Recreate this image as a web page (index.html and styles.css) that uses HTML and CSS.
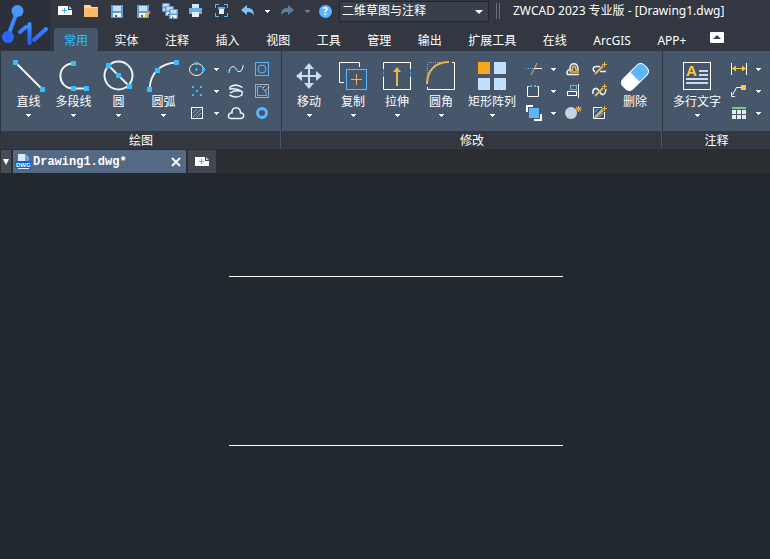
FILE: index.html
```html
<!DOCTYPE html>
<html lang="zh-CN">
<head>
<meta charset="utf-8">
<title>ZWCAD 2023 专业版 - [Drawing1.dwg]</title>
<link rel="stylesheet" href="styles.css">
</head>
<body>
<svg class="defs" width="0" height="0">
  <defs>
    <linearGradient id="brand" x1="0" y1="0" x2="0" y2="1"><stop offset="0" stop-color="#3f93ff"/><stop offset="1" stop-color="#2a5cff"/></linearGradient>
    <symbol id="caret" viewBox="0 0 5 3"><path d="M0 0h5v1H4v1H3v1H2V2H1V1H0z" fill="currentColor"/></symbol>
    <symbol id="newdoc" viewBox="0 0 22 22"><path d="M4 6h10v4h4v5H4z" fill="#fff"/><path d="M15 6l3 3h-3z" fill="#a8d4fb"/><path d="M10.500 8v5M8 10.500h5" stroke="#3fa9f5" fill="none"/></symbol>
    <symbol id="disk" viewBox="0 0 12 13"><path d="M0 0h12v13H0z" fill="#5b9bd8"/><path d="M2 1h8v5H2z" fill="#c3e0fb"/><path d="M2 8h8v4H2z" fill="#fff"/><path d="M4 10h2v2H4z" fill="#3c5878"/></symbol>
    <symbol id="wand" viewBox="0 0 22 22"><path d="M7 16l8-8" stroke="#ecb74f" stroke-width="2"/><path d="M16.500 4v5M14 6.500h5" stroke="#ecb74f"/></symbol>
  </defs>
</svg>

<header class="top">
  <svg class="logo" viewBox="0 0 50 50">
    <path d="M17 12L8 36" stroke="#3987ff" stroke-width="4"/>
    <circle cx="17.500" cy="11" r="6" fill="#4797ff"/><circle cx="8" cy="37" r="6" fill="#2d65ff"/>
    <path d="M20 32l6-5M29.500 24v19M34 40l12-11" stroke="url(#brand)" stroke-width="4" stroke-linecap="round" fill="none"/>
  </svg>
  <div class="bars">
    <div class="quick">
      <button class="q" aria-label="新建"><svg viewBox="0 0 22 22"><use href="#newdoc"/></svg></button>
      <button class="q" aria-label="打开"><svg viewBox="0 0 22 22"><path d="M4 5h6l2 2h6v10H4z" fill="#ffd79e"/><path d="M4 8h14v9H4z" fill="#ffb76c"/></svg></button>
      <button class="q" aria-label="保存"><svg viewBox="0 0 22 22"><use href="#disk" x="5" y="5" width="12" height="13"/></svg></button>
      <button class="q" aria-label="另存为"><svg viewBox="0 0 22 22"><use href="#disk" x="5" y="5" width="12" height="13"/><path d="M12 18l1-4 4-3 1 2-4 4z" fill="#ffb52c"/><path d="M16 12l1-1 2 1-1 2z" fill="#e5543b"/></svg></button>
      <button class="q" aria-label="全部保存"><svg viewBox="0 0 22 22"><use href="#disk" x="4" y="3" width="8" height="9"/><use href="#disk" x="7" y="6" width="9" height="10"/><use href="#disk" x="11" y="9" width="9" height="10"/></svg></button>
      <button class="q" aria-label="打印"><svg viewBox="0 0 22 22"><path d="M8 4h7v4H8z" fill="#d5e9fb"/><path d="M5 8h13v6H5z" fill="#69ade8"/><path d="M8 12h7v5H8z" fill="#e6edf8"/></svg></button>
      <button class="q" aria-label="预览"><svg viewBox="0 0 22 22"><path d="M5.500 8V4.500H9M14 4.500h3.500V8M17.500 13v3.500H14M9 16.500H5.500V13" stroke="#69b4f2" fill="none"/><path d="M8 7h7v2H8z" fill="#69ade8"/><path d="M9 9h5v5H9z" fill="#e6edf8"/></svg></button>
      <button class="q" aria-label="撤销"><svg viewBox="0 0 22 22"><path d="M5 10l6-5v3c5 0 7 2 7 8-1-3-3-4-7-4v3z" fill="#7dc0fa"/></svg></button>
      <button class="drop" aria-label="撤销列表"><svg><use href="#caret"/></svg></button>
      <button class="q" aria-label="重做"><svg viewBox="0 0 22 22"><path d="M18 10l-6-5v3c-5 0-7 2-7 8 1-3 3-4 7-4v3z" fill="#5a7fa0"/></svg></button>
      <button class="drop dim" aria-label="重做列表"><svg><use href="#caret"/></svg></button>
      <button class="q help" aria-label="帮助">?</button>
      <span class="workspace"><select aria-label="工作空间"><option>二维草图与注释</option></select><i></i></span>
      <span class="grip"></span>
      <h1>ZWCAD 2023 专业版 - [Drawing1.dwg]</h1>
    </div>
    <nav class="tabs">
      <a class="on" href="#home">常用</a><a href="#solid">实体</a><a href="#note">注释</a><a href="#insert">插入</a><a href="#view">视图</a><a href="#tools">工具</a><a href="#manage">管理</a><a href="#output">输出</a><a href="#express">扩展工具</a><a href="#online">在线</a><a href="#arcgis">ArcGIS</a><a href="#app">APP+</a>
      <button class="fold" aria-label="折叠功能区"><svg viewBox="0 0 14 11"><path d="M3 7l4-4 4 4z" fill="#3a3f49"/></svg></button>
    </nav>
  </div>
</header>

<section class="ribbon">
  <div class="panel">
    <div class="tools">
      <button class="big"><svg viewBox="0 0 34 34"><path class="w2" d="M3.500 3.500l27 27"/><path class="pt" d="M1 1h5v5H1zM28 28h5v5h-5z"/></svg><span>直线</span><svg class="caret"><use href="#caret"/></svg></button>
      <button class="big"><svg viewBox="0 0 34 34"><path class="w2" d="M16.500 4.500C-1 4.500-1 29.500 16.500 29.500h13"/><path class="pt" d="M14 2h5v5h-5zM14 27h5v5h-5zM27 27h5v5h-5z"/></svg><span>多段线</span><svg class="caret"><use href="#caret"/></svg></button>
      <button class="big"><svg viewBox="0 0 34 34"><circle class="w2" cx="16.500" cy="16.500" r="14"/><path class="w2" d="M6.500 6.500l21 21"/><path class="pt" d="M4 4h5v5H4zM14 14h5v5h-5zM25 25h5v5h-5z"/></svg><span>圆</span><svg class="caret"><use href="#caret"/></svg></button>
      <button class="big"><svg viewBox="0 0 34 34"><path class="w2" d="M2.500 30.500C3 14 14 4 29.500 3.500"/><path class="pt" d="M0 28h5v5H0zM8 9h5v5H8zM27 1h5v5h-5z"/></svg><span>圆弧</span><svg class="caret"><use href="#caret"/></svg></button>
      <div class="small draw">
        <button aria-label="椭圆"><svg viewBox="0 0 22 22"><ellipse class="w1" cx="10.500" cy="11.500" rx="7" ry="6"/><path class="pt" d="M9 4h3v3H9zM16 10h3v3h-3zM9 11h3v1H9zM10 10h1v3h-1z"/></svg></button>
        <button class="drop" aria-label="椭圆选项"><svg><use href="#caret"/></svg></button>
        <button aria-label="样条曲线"><svg viewBox="0 0 22 22"><path class="w1" d="M4 14c1-6 5-7 7-3s6 4 7-3"/><path class="pt" d="M3 13h2v2H3zM10 10h2v2h-2zM17 7h2v2h-2z"/></svg></button>
        <button aria-label="区域"><svg viewBox="0 0 22 22"><rect class="b1" x="4.500" y="4.500" width="13" height="13"/><circle class="b1" cx="11" cy="11" r="4"/></svg></button>
        <button aria-label="点"><svg viewBox="0 0 22 22"><path class="pt" d="M6 6h2v2H6zM14 6h2v2h-2zM10 10h2v2h-2zM6 14h2v2H6zM14 14h2v2h-2z"/></svg></button>
        <button class="drop" aria-label="点选项"><svg><use href="#caret"/></svg></button>
        <button aria-label="螺旋"><svg viewBox="0 0 22 22"><path class="w2 thin" d="M17.500 7.500Q11 3 5 7v2Q12 8 17 11.500V15Q11 19 4.500 15M5 13Q9 10 16 11"/></svg></button>
        <button aria-label="边界"><svg viewBox="0 0 22 22"><rect class="w1" x="4.500" y="4.500" width="13" height="13" stroke-dasharray="1 1"/><path class="b1" d="M6.500 6.500h4l5 7v2h-9z"/><path class="w1" d="M12 8l4-4M14 11l4-4" stroke-dasharray="1 1"/></svg></button>
        <button aria-label="图案填充"><svg viewBox="0 0 22 22"><rect class="w1" x="5.500" y="5.500" width="11" height="11"/><path class="b1" d="M7 11l4-4M7 15l8-8M11 15l4-4"/></svg></button>
        <button class="drop" aria-label="填充选项"><svg><use href="#caret"/></svg></button>
        <button aria-label="云线"><svg viewBox="0 0 22 22"><path class="w2 thin" d="M6 16.500c-4 0-3-6 1-5.500-1-7 9-7 8.500 0 4-.5 4.500 5.500 0 5.500z"/></svg></button>
        <button aria-label="圆环"><svg viewBox="0 0 22 22"><circle cx="11" cy="11" r="4.500" fill="none" stroke="#5bb6ff" stroke-width="3"/></svg></button>
      </div>
    </div>
    <h2>绘图</h2>
  </div>

  <div class="panel modify">
    <div class="tools">
      <button class="big"><svg viewBox="0 0 34 34"><path d="M17 7v20M7 17h20" stroke="#c9dcf2" stroke-width="2"/><path d="M17 4l5 6H12zM17 30l5-6H12zM4 17l6-5v10zM30 17l-6-5v10z" fill="#c9dcf2"/></svg><span>移动</span><svg class="caret"><use href="#caret"/></svg></button>
      <button class="big"><svg viewBox="0 0 34 34"><path class="w1" d="M8 23.500H3.500v-20h20V8"/><rect class="b1" x="10.500" y="10.500" width="20" height="20"/><path class="o1" d="M20.500 15v11M15 20.500h11"/></svg><span>复制</span><svg class="caret"><use href="#caret"/></svg></button>
      <button class="big"><svg viewBox="0 0 34 34"><path class="w1" d="M3.500 10V3.500h27V10M3.500 18v12.500h27V18"/><path class="b1" d="M3.500 11v7M30.500 11v7" stroke-dasharray="1 1"/><path d="M17 27V11" stroke="#ecb74f" stroke-width="2"/><path d="M17 8l4 5h-8z" fill="#ecb74f"/></svg><span>拉伸</span><svg class="caret"><use href="#caret"/></svg></button>
      <button class="big"><svg viewBox="0 0 34 34"><path class="b1" d="M3.500 20V3.500H20" stroke-dasharray="1 1"/><path class="w1" d="M28 3.500h2.500v27h-27V28"/><path d="M3 25C3 12 11 3 25 3" fill="none" stroke="#ecb74f" stroke-width="2"/></svg><span>圆角</span><svg class="caret"><use href="#caret"/></svg></button>
      <button class="big wide"><svg viewBox="0 0 34 34"><path d="M3 3h12v12H3z" fill="#fba51a"/><path d="M19 3h12v12H19zM3 19h12v12H3zM19 19h12v12H19z" fill="#bfe0ff"/></svg><span>矩形阵列</span><svg class="caret"><use href="#caret"/></svg></button>
      <div class="small">
        <button aria-label="修剪"><svg viewBox="0 0 22 22"><path class="b1" d="M4 10.500h8" stroke-dasharray="1 1"/><path class="w1" d="M12 10.500h8"/><path class="o1" d="M9 17l6-12"/></svg></button>
        <button class="drop" aria-label="修剪选项"><svg><use href="#caret"/></svg></button>
        <button aria-label="偏移"><svg viewBox="0 0 22 22"><path class="w2 thin" d="M17 16.500H6c-2-1-1-5 2-5-1-7 7-8 8-1v2"/><path class="o1 thin" d="M17 14H8.500c-1-1 0-2 2-2-1-5 3-5 3.500 0h3"/></svg></button>
        <button aria-label="编辑多段线"><svg viewBox="0 0 22 22"><path class="w2 thin" d="M7 13.500c-3-1-2-5 1-5h4M12 13.500h6"/><use href="#wand"/></svg></button>
        <button aria-label="打断"><svg viewBox="0 0 22 22"><path class="w1" d="M7 6.500H5.500v10h11v-10H15"/><path class="pt" d="M8 5h2v2H8zM12 5h2v2h-2z"/></svg></button>
        <button class="drop" aria-label="打断选项"><svg><use href="#caret"/></svg></button>
        <button aria-label="对齐"><svg viewBox="0 0 22 22"><rect class="b1" x="8.500" y="5.500" width="6" height="4"/><rect class="w1" x="5.500" y="11.500" width="9" height="4"/><path class="w1" d="M16.500 4v14"/></svg></button>
        <button aria-label="编辑样条曲线"><svg viewBox="0 0 22 22"><path class="w2 thin" d="M5 14c-1-5 3-8 6-3s6 5 7-2"/><use href="#wand"/></svg></button>
        <button aria-label="前置"><svg viewBox="0 0 22 22"><path d="M4 3h7v2H6v5H4zM18 12h2v7h-8v-2h6z" fill="#fff"/><path d="M7 6h10v10H7z" fill="#5bb6ff"/></svg></button>
        <button class="drop" aria-label="前置选项"><svg><use href="#caret"/></svg></button>
        <button aria-label="分解"><svg viewBox="0 0 22 22"><circle cx="9" cy="11" r="6" fill="#c8d3e3"/><path class="o1" d="M16.500 4v6M13.500 7h6M14 5l5 4M14 9l5-4"/></svg></button>
        <button aria-label="编辑填充"><svg viewBox="0 0 22 22"><path class="w1" d="M14 5.500H5.500v11h11V10"/><path class="b1" d="M7 10l3-3M7 14l7-7M11 15l4-4"/><use href="#wand"/></svg></button>
      </div>
      <button class="big"><svg viewBox="0 0 34 34"><g transform="rotate(-45 17 18)"><rect x="2" y="11" width="30" height="14" rx="5" fill="#fff"/><path d="M17 11h10q5 0 5 5v4q0 5-5 5H17z" fill="#5bb6ff"/><rect x="2" y="11" width="30" height="14" rx="5" fill="none" stroke="#fff"/></g></svg><span>删除</span></button>
    </div>
    <h2>修改</h2>
  </div>

  <div class="panel">
    <div class="tools">
      <button class="big wide"><svg viewBox="0 0 34 34"><rect class="w1" x="3.500" y="3.500" width="27" height="27"/><text class="letter" x="6" y="17">A</text><path d="M19 12h9M19 16h9M6 20h22M6 24h22" stroke="#c9dcf2" stroke-width="2"/></svg><span>多行文字</span><svg class="caret"><use href="#caret"/></svg></button>
      <div class="small pair">
        <button aria-label="标注"><svg viewBox="0 0 22 22"><path class="w1" d="M4.500 5v12M19.500 5v12"/><path d="M7 10.500h10" stroke="#ffc832"/><path d="M5 10.500l4-3v6zM19 10.500l-4-3v6z" fill="#ffc832"/></svg></button>
        <button class="drop" aria-label="标注选项"><svg><use href="#caret"/></svg></button>
        <button aria-label="引线"><svg viewBox="0 0 22 22"><path class="w1" d="M14 7.500H9.500L5.500 15M4.500 12v4.500H8"/><path d="M14 5h5v5h-5z" fill="#ffc832"/></svg></button>
        <button class="drop" aria-label="引线选项"><svg><use href="#caret"/></svg></button>
        <button aria-label="表格"><svg viewBox="0 0 22 22"><path d="M5 5h14v2H5z" fill="#7cc48a"/><path d="M5 8h4v4H5zM10 8h4v4h-4zM15 8h4v4h-4zM5 13h4v4H5zM10 13h4v4h-4zM15 13h4v4h-4z" fill="#e8ecf0"/></svg></button>
        <button class="drop" aria-label="表格选项"><svg><use href="#caret"/></svg></button>
      </div>
    </div>
    <h2>注释</h2>
  </div>
</section>

<div class="docs">
  <button class="list" aria-label="图纸列表"><svg viewBox="0 0 8 8"><path d="M1 1h6L4 7z" fill="#fff"/></svg></button>
  <div class="doc">
    <svg class="dwg" viewBox="0 0 16 16"><path d="M3 0h7l4 4v11H3z" fill="#dcecff"/><path d="M10 0l4 4v3h-4z" fill="#58a8f2"/><path d="M0 7h16v7H0z" fill="#0a62d8"/><text x="1" y="13">DWG</text></svg>
    <span>Drawing1.dwg*</span>
    <button aria-label="关闭"><svg viewBox="0 0 10 10"><path d="M1 1l8 8M9 1L1 9" stroke="#fff" stroke-width="2"/></svg></button>
  </div>
  <button class="add" aria-label="新建图纸"><svg viewBox="0 0 22 22"><use href="#newdoc"/></svg></button>
</div>

<main class="sheet"><svg><path d="M229 103.500h334M229 272.500h334" stroke="#fff"/></svg></main>
</body>
</html>
```

FILE: styles.css
```css
* { box-sizing: border-box; }
body {
  margin: 0;
  min-height: 100vh;
  display: flex;
  flex-direction: column;
  background: #212830;
  color: #fff;
  font: 12px/16px "Noto Sans", "Noto Sans CJK SC", sans-serif;
}
button {
  margin: 0;
  padding: 0;
  border: 0;
  background: none;
  color: inherit;
  font: inherit;
}
svg { display: block; }
h1, h2 { margin: 0; font-size: 12px; font-weight: 400; white-space: nowrap; }
.defs { position: absolute; }

.top { display: flex; background: #323741; }
.logo { width: 50px; height: 50px; flex: none; background: #2b303b; }
.bars { flex: 1; min-width: 0; }
.quick { display: flex; align-items: center; height: 22px; padding-left: 2px; }
.q { width: 26px; flex: none; }
.q svg { width: 22px; height: 22px; margin: 0 auto; }
.drop { width: 14px; flex: none; }
.drop svg { width: 5px; height: 3px; margin: 0 auto; }
.dim { color: #7c828b; }
.q.help {
  width: 13px;
  height: 13px;
  margin: 0 7px 0 5px;
  border-radius: 50%;
  background: #5bb6ff;
  font-size: 10px;
  line-height: 13px;
  font-weight: 700;
}
.workspace { position: relative; display: block; flex: none; width: 150px; }
.workspace select {
  display: block;
  appearance: none;
  width: 100%;
  height: 21px;
  padding: 0 2px;
  border: 1px solid #22262e;
  border-radius: 0;
  background: #3a404b;
  color: #fff;
  font: inherit;
}
.workspace i {
  position: absolute;
  right: 6px;
  top: 9px;
  border: 4px solid transparent;
  border-top-color: #fff;
  border-bottom: 0;
}
.grip { width: 4px; height: 16px; margin: 0 13px 0 7px; border: solid #6a6e76; border-width: 0 1px; }
.tabs {
  display: flex;
  justify-content: space-between;
  align-items: flex-end;
  height: 29px;
  padding: 0 46px 0 4px;
}
.tabs a {
  height: 23px;
  padding: 1px 10px 0;
  border-radius: 3px 3px 0 0;
  color: #fff;
  line-height: 24px;
  text-decoration: none;
  white-space: nowrap;
}
.tabs .on { background: #46566b; color: #35bdff; }
.fold { width: 14px; margin: 0 0 8px 7px; border-radius: 1px; background: #fff; }

.ribbon {
  display: grid;
  grid-template-columns: 281fr 381fr 108fr;
  background: #323741;
}
.panel { min-width: 0; border-left: 1px solid #2f3540; }
.panel + .panel { box-shadow: -1px 0 #46566b; }
.tools { display: flex; height: 80px; padding: 7px 0 0 5px; background: #46566b; }
.panel h2 { height: 18px; line-height: 20px; text-align: center; }
.big {
  display: flex;
  flex-direction: column;
  align-items: center;
  flex: none;
  width: 45px;
  padding-top: 1px;
  white-space: nowrap;
}
.modify .big { width: 44px; }
.big.wide, .modify .big.wide { width: 58px; }
.big > svg { width: 34px; height: 34px; }
.big > span { margin-top: 1px; }
.big .caret { width: 5px; height: 3px; margin-top: 4px; }
.small {
  display: grid;
  grid-template-columns: 24px 16px 24px 28px;
  grid-auto-rows: 22px;
  flex: none;
  height: 66px;
}
.small.draw { grid-template-columns: 22px 16px 24px 28px; }
.small.pair { grid-template-columns: 24px 16px; }
.small button { width: 100%; }
.small svg { width: 22px; height: 22px; margin: 0 auto; }
.small .drop svg { width: 5px; height: 3px; }
.w1, .w2, .b1, .o1 { fill: none; stroke: #fff; }
.w2 { stroke-width: 2; stroke: #eef2f6; }
.thin { stroke-width: 1.5; }
.b1 { stroke: #5bb6ff; }
.o1 { stroke: #ecb74f; }
.pt { fill: #35bdff; }
.letter { fill: #ffc83c; font: 700 15px "Liberation Sans", sans-serif; }

.docs { display: flex; gap: 2px; height: 24px; padding: 1px 0 0 1px; background: #2b2d31; }
.list { width: 10px; background: #454d55; }
.list svg { width: 8px; height: 8px; margin: 0 auto; }
.doc {
  display: flex;
  align-items: center;
  gap: 2px;
  width: 173px;
  padding: 0 5px 0 2px;
  background: #546a84;
  font: 700 12px/16px "Liberation Mono", monospace;
}
.doc span { flex: 1; }
.doc button svg { width: 10px; height: 10px; }
.dwg { width: 16px; height: 16px; }
.dwg text { fill: #fff; font: 700 6px "Liberation Sans", sans-serif; }
.add { width: 28px; background: #41464f; }
.add svg { width: 22px; height: 22px; margin: 0 auto; }
.sheet { flex: 1; display: flex; }
.sheet svg { width: 100%; flex: 1; }
```
